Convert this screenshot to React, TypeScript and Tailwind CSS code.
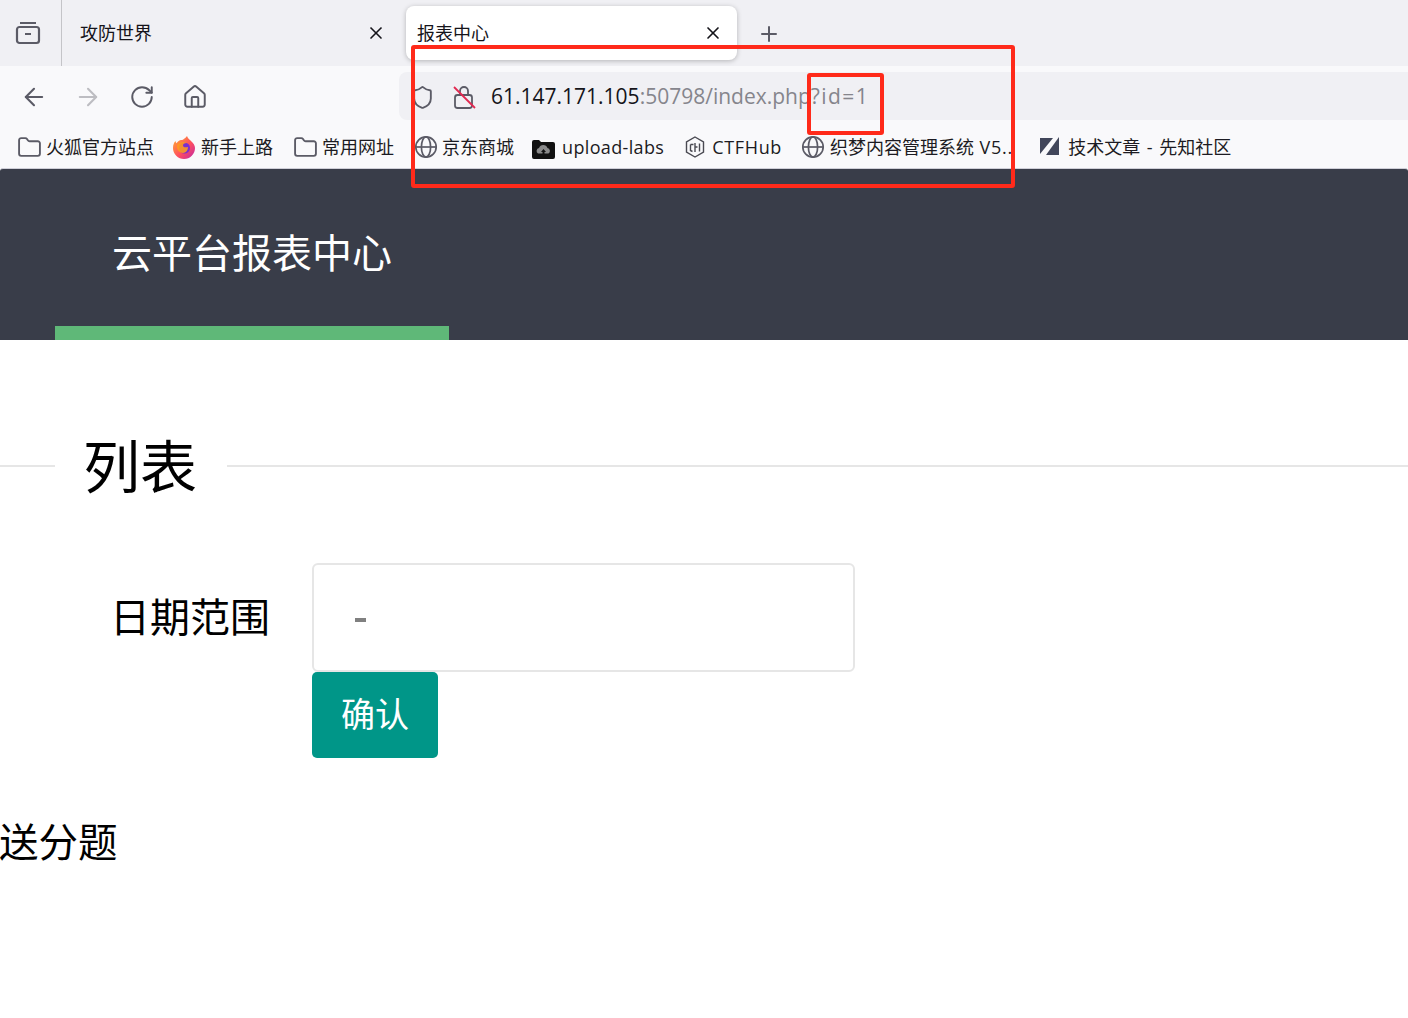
import React from 'react';
import { ArrowLeft, ArrowRight, Folder, Home, Plus, RotateCw, Shield, X } from 'lucide-react';

const Globe = () => (
  <svg width="24" height="24" viewBox="0 0 24 24" fill="none" stroke="#5b5b66" strokeWidth="1.7" className="shrink-0">
    <circle cx="12" cy="12" r="10.2" />
    <ellipse cx="12" cy="12" rx="4.6" ry="10.2" />
    <path d="M2 12h20" />
  </svg>
);

const FirefoxLogo = () => (
  <svg width="24" height="24" viewBox="0 0 24 24" className="shrink-0">
    <defs>
      <linearGradient id="fx" x1="0" y1="0" x2="1" y2="1">
        <stop offset="0" stopColor="#ffb22e" />
        <stop offset="0.55" stopColor="#ff4f5e" />
        <stop offset="1" stopColor="#c026a8" />
      </linearGradient>
    </defs>
    <path d="M15 1c.5 2 2 3 3.500 4.500C21.500 8 23 10.500 23 13a11 11 0 0 1-22 0c0-3 1-5.500 2.500-7 .1 1 .5 1.700 1 2.200C6 6 8 4.500 10 5c1-.2 3-1.500 5-4z" fill="url(#fx)" />
    <circle cx="12.500" cy="13" r="5.500" fill="#7a2fd0" />
    <path d="M5 10c2-3 7-4 10-2-3 0-4 1-4 2.500 0 2 3 2 5 1.500 0 3-2 6-5 6-4 0-7-4-6-8z" fill="#ff9a1f" opacity="0.9" />
  </svg>
);

const UploadIcon = () => (
  <svg width="23" height="20" viewBox="0 0 23 20" className="shrink-0 mt-[4px]">
    <path d="M0 3a2 2 0 0 1 2-2h5l2 2h12a2 2 0 0 1 2 2v13a2 2 0 0 1-2 2H2a2 2 0 0 1-2-2z" fill="#111" />
    <path d="M6 14.500a3 3 0 0 1 1-5.500 4.500 4.500 0 0 1 8.500 0 3 3 0 0 1 1 5.500z" fill="#8a8a8a" />
    <path d="M11.500 10l-2.500 3h1.500v3h2v-3H14z" fill="#111" />
  </svg>
);

const CtfHubIcon = () => (
  <svg width="22" height="24" viewBox="0 0 22 24" fill="none" stroke="#4a4a52" strokeWidth="1.400" className="shrink-0">
    <path d="M11 2l8.500 5v10L11 22l-8.500-5V7z" />
    <path d="M6.500 9.500h3M6.500 9.500v6l2 1M11 8v9M11 12h2.500M15.500 8.500v8" />
  </svg>
);

const XianzhiIcon = () => (
  <svg width="22" height="22" viewBox="0 0 22 22" className="shrink-0">
    <path d="M1 2h13L1 18z" fill="#41465a" />
    <path d="M20 1v18H7z" fill="#41465a" />
  </svg>
);

const InsecureLock = () => (
  <svg width="24" height="26" viewBox="0 0 24 26" fill="none" className="shrink-0">
    <rect x="2" y="11" width="17" height="13" rx="2.500" stroke="#5b5b66" strokeWidth="1.800" />
    <path d="M7 11V7a4 4 0 0 1 8 0v4" stroke="#5b5b66" strokeWidth="1.800" />
    <path d="M1 3l21 21" stroke="#e22850" strokeWidth="1.800" />
  </svg>
);

const Bookmark = ({ icon, label, className }: { icon: React.ReactNode; label: React.ReactNode; className: string }) => (
  <div className={`flex items-center shrink-0 ${className}`}>
    {icon}
    <span className="text-[18px] leading-[24px] text-[#1c1b22] whitespace-nowrap font-['Open_Sans','Noto_Sans_CJK_SC',sans-serif]">{label}</span>
  </div>
);

const App: React.FC = () => {
  return (
    <div className="relative w-[1408px] h-[1018px] overflow-hidden bg-white font-['Noto_Sans_CJK_SC','Liberation_Sans',sans-serif] text-black">
      {/* browser tab strip */}
      <div className="h-[66px] bg-[#f0f0f4] flex">
        <div className="w-[62px] h-full border-r border-[#c4c4c8] flex items-center pl-[15px]">
          <svg width="26" height="24" viewBox="0 0 26 24" fill="none" stroke="#5b5b66" strokeWidth="2.200">
            <rect x="2" y="6" width="22" height="16" rx="2.500" />
            <path d="M5 2h16M10 13h6" />
          </svg>
        </div>
        <div className="w-[334px] flex items-center pl-[18px] pr-[10px]">
          <span className="flex-1 text-[18px] text-[#15141a] pb-[1px]">攻防世界</span>
          <X size={20} color="#15141a" strokeWidth={2} />
        </div>
        <div className="ml-[10px] mt-[6px] w-[331px] h-[54px] bg-white rounded-[8px] shadow-[0_1px_5px_rgba(0,0,0,0.25)] flex items-center pl-[11px] pr-[14px]">
          <span className="flex-1 text-[18px] text-[#15141a] pb-[1px]">报表中心</span>
          <X size={20} color="#15141a" strokeWidth={2} />
        </div>
        <div className="ml-[20px] flex items-center pt-[2px]">
          <Plus size={24} color="#5b5b66" strokeWidth={2} />
        </div>
      </div>

      {/* nav + url bar */}
      <div className="h-[54px] bg-[#f9f9fb] flex items-end">
        <div className="w-[399px] h-[48px] flex items-center pl-[20px] pt-[2px]">
          <ArrowLeft size={28} color="#5b5b66" strokeWidth={1.800} />
          <ArrowRight size={28} color="#bdbdc2" strokeWidth={1.800} className="ml-[26px]" />
          <RotateCw size={26} color="#5b5b66" strokeWidth={1.800} className="ml-[27px]" />
          <Home size={26} color="#5b5b66" strokeWidth={1.800} className="ml-[27px]" />
        </div>
        <div className="flex-1 h-[48px] bg-[#f0f0f4] rounded-l-[8px] flex items-center pl-[11px] pt-[2px]">
          <Shield size={25} color="#5b5b66" strokeWidth={1.800} />
          <div className="ml-[18px]">
            <InsecureLock />
          </div>
          <span className="ml-[14px] text-[21px] font-['Open_Sans','Liberation_Sans',sans-serif] text-[#15141a] whitespace-nowrap">
            61.147.171.105<span className="text-[#85858c]">:50798/index.php<span className="tracking-[1.400px]">?id=1</span></span>
          </span>
        </div>
      </div>

      {/* bookmarks */}
      <div className="h-[48px] bg-[#f9f9fb] flex items-center pl-[17px] pt-[6px]">
        <Bookmark icon={<Folder size={25} color="#5b5b66" strokeWidth={1.800} />} label="火狐官方站点" className="gap-[4px]" />
        <Bookmark icon={<FirefoxLogo />} label="新手上路" className="gap-[5px] ml-[18px]" />
        <Bookmark icon={<Folder size={25} color="#5b5b66" strokeWidth={1.800} />} label="常用网址" className="gap-[4px] ml-[20px]" />
        <Bookmark icon={<Globe />} label="京东商城" className="gap-[4px] ml-[20px]" />
        <Bookmark icon={<UploadIcon />} label={<span className="tracking-[0.350px]">upload-labs</span>} className="gap-[7px] ml-[18px]" />
        <Bookmark icon={<CtfHubIcon />} label={<span className="tracking-[0.650px]">CTFHub</span>} className="gap-[6px] ml-[20px]" />
        <Bookmark
          icon={<Globe />}
          label={<>织梦内容管理系统<span className="tracking-[0.800px]"> V5..</span></>}
          className="gap-[5px] ml-[19px]"
        />
        <Bookmark icon={<XianzhiIcon />} label={<span className="[word-spacing:2px]">技术文章 - 先知社区</span>} className="gap-[7px] ml-[26px]" />
      </div>

      {/* page header */}
      <div className="h-[172px] bg-[#393d49] border-t border-[#cfcfd8] flex flex-col justify-end rounded-t-[3px]">
        <div className="ml-[55px] w-[394px] h-[157px] border-b-[14px] border-[#5fb878] flex items-center justify-center pb-[8px]">
          <span className="text-[40px] leading-none text-white">云平台报表中心</span>
        </div>
      </div>

      {/* list section */}
      <div className="mt-[59px] h-[134px] flex items-start">
        <div className="w-[55px] h-[2px] bg-[#e6e6e6] mt-[66px]" />
        <span className="pl-[28px] pr-[30px] text-[57px] leading-[128px] h-[134px] text-black">列表</span>
        <div className="flex-1 h-[2px] bg-[#e6e6e6] mt-[66px]" />
      </div>

      {/* form */}
      <div className="mt-[30px] flex">
        <div className="w-[312px] h-[109px] flex items-center pl-[110px] pb-[6px]">
          <span className="text-[40px] leading-none">日期范围</span>
        </div>
        <div className="w-[543px] h-[109px] border-2 border-[#e6e6e6] rounded-[6px] flex items-center pl-[41px]">
          <span className="w-[11px] h-[4px] bg-[#808080] mt-[5px]" />
        </div>
      </div>
      <div className="pl-[312px]">
        <button className="w-[126px] h-[86px] bg-[#009688] rounded-[5px] text-white text-[34px] leading-none pb-[4px]">确认</button>
      </div>
      <div className="mt-[57px] text-[39.500px] leading-[50px] -ml-[1px]">送分题</div>

      {/* red annotations */}
      <div className="absolute left-[411px] top-[45px] w-[604px] h-[143px] border-[4px] border-[#ff2a1a] rounded-[3px]" />
      <div className="absolute left-[807px] top-[73px] w-[77px] h-[62px] border-[4px] border-[#ff2a1a] rounded-[3px]" />
    </div>
  );
};

export default App;
